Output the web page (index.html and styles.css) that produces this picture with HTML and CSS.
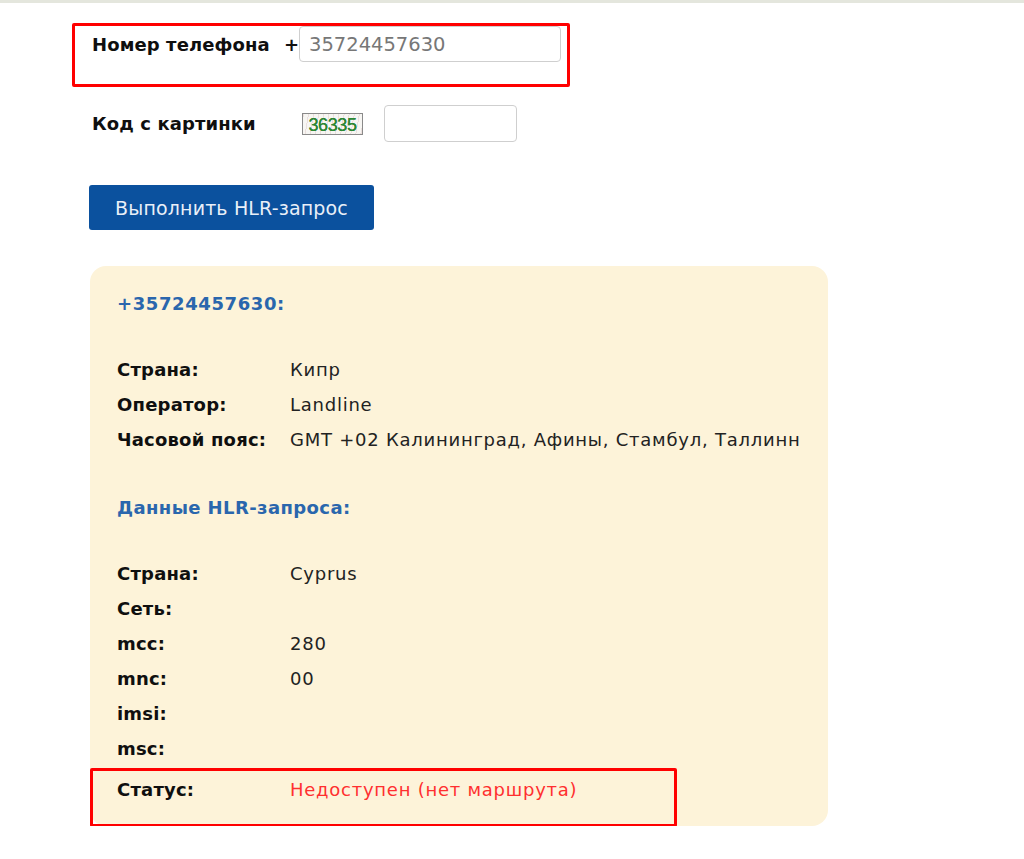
FILE: index.html
```html
<!DOCTYPE html>
<html lang="ru">
<head>
<meta charset="utf-8">
<title>HLR-запрос</title>
<link rel="stylesheet" href="styles.css">
</head>
<body>
<div class="topline"></div>
<main class="page">
  <form class="form">
    <div class="field field-phone">
      <label class="label label-phone" for="phone">Номер телефона</label>
      <span class="plus">+</span>
      <input class="input input-phone" id="phone" type="text" value="35724457630">
    </div>
    <div class="field field-captcha">
      <label class="label label-captcha" for="code">Код с картинки</label>
      <span class="captcha"><span class="captcha-code">36335</span></span>
      <input class="input input-captcha" id="code" type="text">
    </div>
    <button class="btn" type="button">Выполнить HLR-запрос</button>
  </form>

  <section class="card">
    <h2 class="card-title">+35724457630:</h2>
    <dl class="rows rows-info">
      <dt>Страна:</dt><dd>Кипр</dd>
      <dt>Оператор:</dt><dd>Landline</dd>
      <dt>Часовой пояс:</dt><dd>GMT +02 Калининград, Афины, Стамбул, Таллинн</dd>
    </dl>
    <h3 class="card-subtitle">Данные HLR-запроса:</h3>
    <dl class="rows rows-hlr">
      <dt>Страна:</dt><dd>Cyprus</dd>
      <dt>Сеть:</dt><dd></dd>
      <dt>mcc:</dt><dd>280</dd>
      <dt>mnc:</dt><dd>00</dd>
      <dt>imsi:</dt><dd></dd>
      <dt>msc:</dt><dd></dd>
    </dl>
    <dl class="rows rows-status">
      <dt>Статус:</dt><dd class="status-value">Недоступен (нет маршрута)</dd>
    </dl>
  </section>
</main>
</body>
</html>
```

FILE: styles.css
```css
html, body {
  margin: 0;
  padding: 0;
  background: #ffffff;
}

body {
  font-family: "DejaVu Sans", "Open Sans", sans-serif;
  color: #1c1c1c;
}

.topline {
  height: 3px;
  background: #e4e6dd;
}

.page {
  padding-left: 72px;
}

.form {
  display: flex;
  flex-direction: column;
  align-items: flex-start;
}

.field {
  display: flex;
  align-items: center;
}

.label {
  font-weight: bold;
  font-size: 18px;
  letter-spacing: 0.1px;
  color: #0f0f0f;
}

.field-phone {
  margin-top: 20px;
  width: 498px;
  height: 64px;
  box-sizing: border-box;
  border: 3px solid #ff0000;
  border-radius: 2px;
  padding: 0 6px 22px 17px;
}

.label-phone {
  width: 192px;
  flex: none;
}

.plus {
  width: 15px;
  flex: none;
  font-weight: bold;
  font-size: 18px;
  color: #111111;
}

.input {
  box-sizing: border-box;
  border: 1px solid #cfcfcf;
  border-radius: 4px;
  background: #ffffff;
  font-family: "DejaVu Sans", "Open Sans", sans-serif;
  outline: none;
}

.input-phone {
  width: 262px;
  height: 36px;
  padding: 0 9px;
  font-size: 19.5px;
  color: #777777;
}

.field-captcha {
  margin-top: 18px;
  margin-left: 20px;
}

.label-captcha {
  width: 210px;
  flex: none;
}

.captcha {
  width: 61px;
  height: 22px;
  box-sizing: border-box;
  border: 1px solid #8a8a8a;
  background-color: #f7f6f3;
  background-image:
    repeating-linear-gradient(100deg, rgba(210, 180, 180, 0.35) 0 1px, transparent 1px 5px);
  display: flex;
  align-items: center;
  justify-content: center;
  overflow: hidden;
  flex: none;
}

.captcha-code {
  font-family: "Liberation Sans", Arial, sans-serif;
  font-size: 18px;
  line-height: 18px;
  color: #2b8a33;
  letter-spacing: -0.4px;
  text-shadow: 0 0 0.6px #1d5e22;
  margin-top: 2px;
}

.input-captcha {
  margin-left: 21px;
  width: 133px;
  height: 37px;
}

.btn {
  margin-top: 43px;
  margin-left: 17px;
  width: 285px;
  height: 45px;
  border: none;
  border-radius: 3px;
  background: #0b519e;
  color: #e9eff8;
  font-family: "DejaVu Sans", "Open Sans", sans-serif;
  font-size: 19px;
  letter-spacing: 0.15px;
  padding: 0;
  cursor: pointer;
}

.card {
  margin-top: 36px;
  margin-left: 18px;
  width: 738px;
  height: 560px;
  box-sizing: border-box;
  background: #fdf3d9;
  border-radius: 16px;
  padding: 20px 27px 0;
}

.card-title,
.card-subtitle {
  margin: 0;
  font-size: 18px;
  line-height: 35px;
  font-weight: bold;
  color: #2a66ad;
  letter-spacing: 0.6px;
}

.card-subtitle {
  font-size: 18px;
  letter-spacing: 0.4px;
  margin-top: 33px;
}

.rows {
  margin: 0;
  display: grid;
  grid-template-columns: 173px 1fr;
  grid-auto-rows: 35px;
  align-items: center;
  font-size: 18px;
  line-height: 35px;
}

.rows dt {
  font-weight: bold;
  font-size: 18px;
  letter-spacing: 0.2px;
  color: #0f0f0f;
}

.rows dd {
  margin: 0;
  color: #222222;
  letter-spacing: 0.75px;
  white-space: nowrap;
}

.rows-info {
  margin-top: 31px;
}

.rows-hlr {
  margin-top: 31px;
}

.rows-status {
  margin-top: 2px;
  margin-left: -27px;
  width: 587px;
  box-sizing: border-box;
  border: 3px solid #ff0000;
  border-radius: 2px;
  padding: 1px 0 17px 24px;
}

.rows-status .status-value {
  color: #ff2f2f;
}
```
